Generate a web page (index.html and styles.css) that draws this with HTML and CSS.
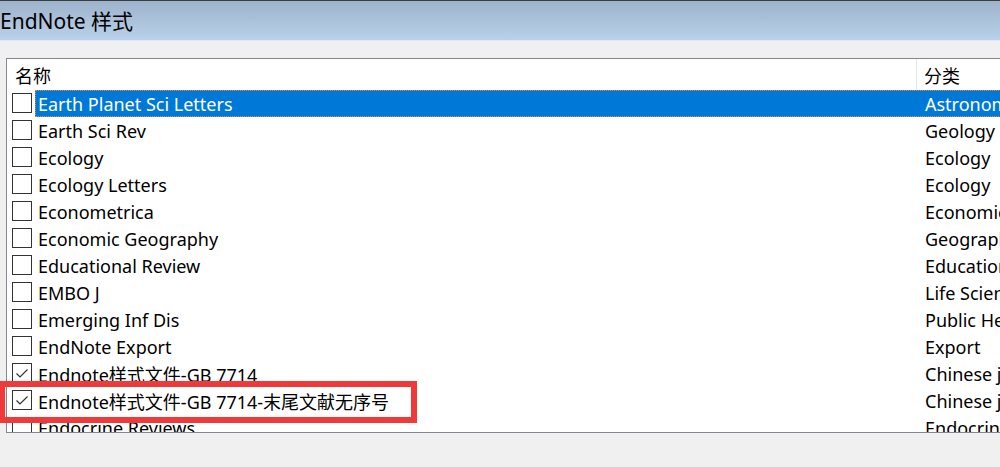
FILE: index.html
```html
<!DOCTYPE html>
<html>
<head>
<meta charset="utf-8">
<link rel="stylesheet" href="styles.css">
</head>
<body>
<div class="titlebar"><span class="title">EndNote 样式</span></div>
<div class="content">
  <div class="listbox">
    <div class="header">
      <div class="hcol name-h">名称</div>
      <div class="hcol cat-h">分类</div>
    </div>
    <div class="rows">
      <div class="row selected"><div class="cb"></div><div class="cells"><div class="name">Earth Planet Sci Letters</div><div class="cat">Astronomy</div></div></div>
      <div class="row"><div class="cb"></div><div class="cells"><div class="name">Earth Sci Rev</div><div class="cat">Geology</div></div></div>
      <div class="row"><div class="cb"></div><div class="cells"><div class="name">Ecology</div><div class="cat">Ecology</div></div></div>
      <div class="row"><div class="cb"></div><div class="cells"><div class="name">Ecology Letters</div><div class="cat">Ecology</div></div></div>
      <div class="row"><div class="cb"></div><div class="cells"><div class="name">Econometrica</div><div class="cat">Economics</div></div></div>
      <div class="row"><div class="cb"></div><div class="cells"><div class="name">Economic Geography</div><div class="cat">Geography</div></div></div>
      <div class="row"><div class="cb"></div><div class="cells"><div class="name">Educational Review</div><div class="cat">Education</div></div></div>
      <div class="row"><div class="cb"></div><div class="cells"><div class="name">EMBO J</div><div class="cat">Life Science</div></div></div>
      <div class="row"><div class="cb"></div><div class="cells"><div class="name">Emerging Inf Dis</div><div class="cat">Public Health</div></div></div>
      <div class="row"><div class="cb"></div><div class="cells"><div class="name">EndNote Export</div><div class="cat">Export</div></div></div>
      <div class="row"><div class="cb checked"><svg viewBox="0 0 20 20" width="20" height="20"><path d="M4.5 10.5 L8 14 L15.5 6.5" fill="none" stroke="#333" stroke-width="1.2"/></svg></div><div class="cells"><div class="name">Endnote样式文件-GB 7714</div><div class="cat">Chinese journal</div></div></div>
      <div class="row"><div class="cb checked"><svg viewBox="0 0 20 20" width="20" height="20"><path d="M4.5 10.5 L8 14 L15.5 6.5" fill="none" stroke="#333" stroke-width="1.2"/></svg></div><div class="cells"><div class="name">Endnote样式文件-GB 7714-末尾文献无序号</div><div class="cat">Chinese journal</div></div></div>
      <div class="row"><div class="cb"></div><div class="cells"><div class="name">Endocrine Reviews</div><div class="cat">Endocrinology</div></div></div>
    </div>
  </div>
</div>
<div class="highlight-box"></div>
</body>
</html>
```
FILE: styles.css
```css
html, body {
  margin: 0;
  padding: 0;
  width: 1000px;
  height: 467px;
  overflow: hidden;
  background: #f0f0f0;
  font-family: "Noto Sans", "Noto Sans CJK SC", sans-serif;
  color: #000;
}
.titlebar {
  height: 39px;
  border-top: 1px solid #3c3c3c;
  border-bottom: 1px solid #dfe8f2;
  background: linear-gradient(to bottom, #9db3cb, #b9d1ea);
  display: flex;
  align-items: center;
}
.title {
  font-size: 21px;
  padding-left: 0;
  line-height: 1;
  margin-top: 1px;
}
.content {
  padding: 17px 0 0 6px;
}
.listbox {
  width: 1100px;
  height: 373px;
  border: 1px solid #828790;
  background: #fff;
  overflow: hidden;
}
.header {
  display: flex;
  height: 31px;
  font-size: 18px;
}
.hcol {
  display: flex;
  align-items: center;
  padding-left: 8px;
  box-sizing: border-box;
}
.name-h {
  width: 910px;
  border-right: 1px solid #e5e5e5;
}
.cat-h {
  flex: 1;
  padding-left: 7px;
}
.row {
  display: flex;
  height: 27px;
  font-size: 18px;
}
.cb {
  width: 18px;
  height: 18px;
  border: 1px solid #333;
  margin: 3px 3px 0 5px;
  background: #fff;
  flex: none;
  position: relative;
}
.cb svg {
  position: absolute;
  left: -1px;
  top: -1px;
}
.cells {
  display: flex;
  flex: 1;
  height: 27px;
  box-sizing: border-box;
  border: 1px solid transparent;
}
.name {
  width: 881px;
  padding-left: 2px;
  display: flex;
  align-items: center;
  white-space: nowrap;
  flex: none;
}
.cat {
  flex: 1;
  padding-left: 6px;
  display: flex;
  align-items: center;
  white-space: nowrap;
}
.selected .cells {
  background: #0078d7;
  color: #fff;
  border: 1px dotted #e8902a;
}
.highlight-box {
  position: absolute;
  left: -1px;
  top: 381px;
  width: 406px;
  height: 30px;
  border: 6px solid #f03a3a;
}
```
